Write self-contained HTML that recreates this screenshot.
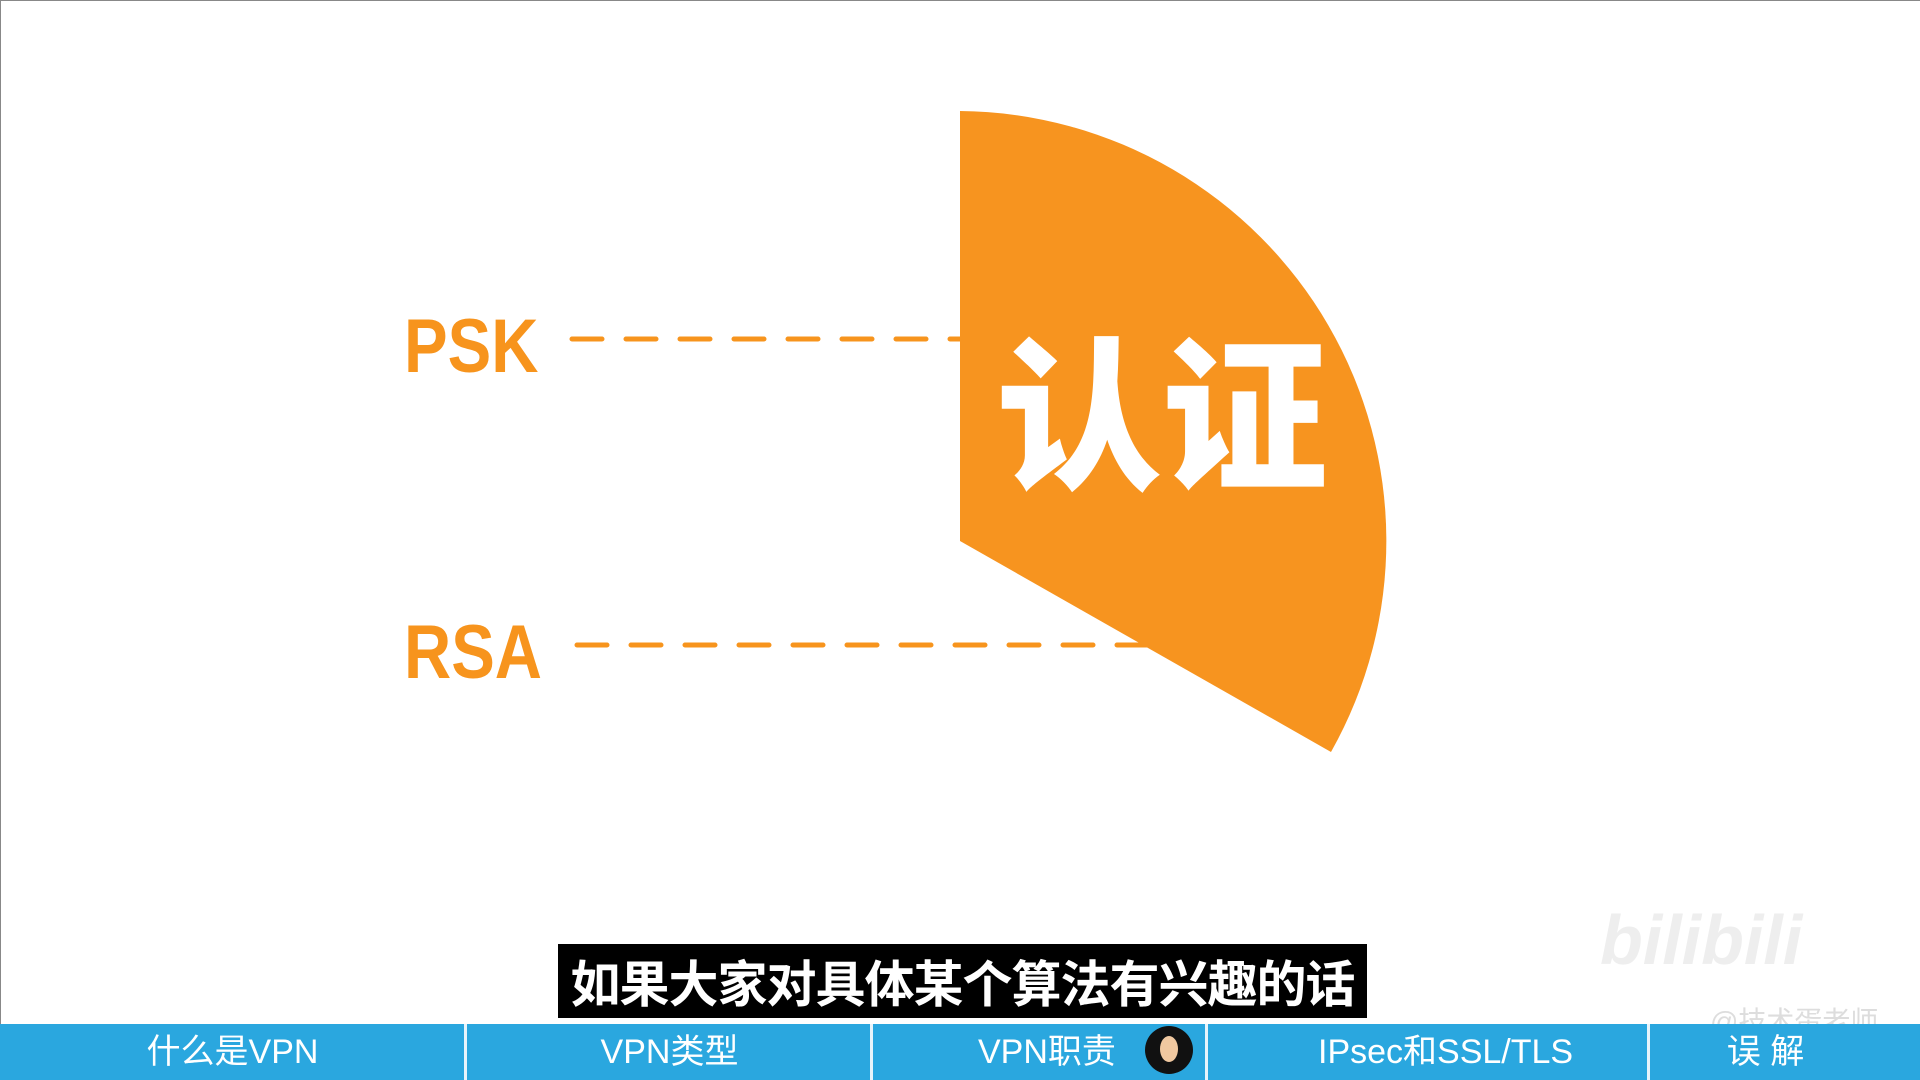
<!DOCTYPE html>
<html><head><meta charset="utf-8"><style>
body{margin:0;width:1920px;height:1080px;background:#fff;position:relative;overflow:hidden;font-family:"Liberation Sans","Noto Sans CJK SC",sans-serif}
.lbl{position:absolute;color:#F7941D;font-weight:bold;font-size:76px;line-height:1;transform:scaleX(0.86);transform-origin:left top}
.sub{position:absolute;left:558px;top:944px;width:809px;height:74px;background:#000;color:#fff;font-size:50px;font-weight:bold;text-align:center;line-height:74px;font-family:"Noto Sans CJK SC",sans-serif;letter-spacing:-1px}
.bar{position:absolute;left:0;top:1024px;width:1920px;height:56px;background:#2aa7df}
.bar div{position:absolute;top:0;height:56px;color:#fff;font-size:34px;line-height:56px;text-align:center}
.sep{position:absolute;top:1024px;width:3px;height:56px;background:#e8f4fb}
</style></head><body>
<div style="position:absolute;left:0;top:0;width:1920px;height:1px;background:#888"></div>
<div style="position:absolute;left:0;top:0;width:1px;height:1024px;background:#888"></div>
<svg width="1920" height="1080" style="position:absolute;left:0;top:0">
<line x1="572" y1="339" x2="960" y2="339" stroke="#F7941D" stroke-width="5" stroke-dasharray="30 24" stroke-linecap="round"/>
<line x1="577" y1="645" x2="1160" y2="645" stroke="#F7941D" stroke-width="5" stroke-dasharray="30 24" stroke-linecap="round"/>
<path d="M960 111 A430 430 0 0 1 1331 752 L960 541 Z" fill="#F7941F"/>
</svg>
<div class="lbl" style="left:404px;top:309px">PSK</div>
<div class="lbl" style="left:404px;top:615px">RSA</div>
<div style="position:absolute;left:996px;top:322px;color:#fff;font-size:166px;font-weight:900;line-height:1;font-family:'Noto Sans CJK SC',sans-serif">认证</div>
<div class="sub">如果大家对具体某个算法有兴趣的话</div>
<div style="position:absolute;left:1600px;top:900px;color:#eee;font-size:70px;font-weight:bold;font-style:italic">bilibili</div>
<div style="position:absolute;left:1710px;top:1000px;color:#ddd;font-size:28px">@技术蛋老师</div>
<div class="bar">
<div style="left:0;width:465px">什么是VPN</div>
<div style="left:468px;width:403px">VPN类型</div>
<div style="left:978px;width:145px;text-align:left">VPN职责</div>
<div style="left:1230px;width:439px;text-align:left;padding-left:88px;width:auto">IPsec和SSL/TLS</div>
<div style="left:1651px;width:229px">误 解</div>
</div>
<div class="sep" style="left:464px"></div>
<div class="sep" style="left:870px"></div>
<div class="sep" style="left:1205px"></div>
<div class="sep" style="left:1647px"></div>
<div style="position:absolute;left:1145px;top:1026px;width:48px;height:48px;border-radius:50%;background:#111"></div>
<div style="position:absolute;left:1160px;top:1036px;width:18px;height:26px;border-radius:50%;background:#f0c8a0"></div>
</body></html>
